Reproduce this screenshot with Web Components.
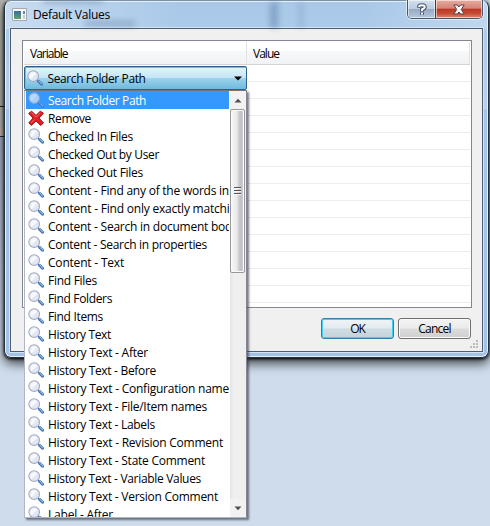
<!DOCTYPE html>
<html lang="en"><head><meta charset="utf-8"><title>Default Values</title>
<style>
html,body{margin:0;width:490px;height:526px;overflow:hidden;background:#cfdcec;font:12px/18px "Open Sans","Noto Sans",sans-serif;color:#000}
</style></head><body>
<dialog-window caption="Default Values"></dialog-window>
<script>
const define=(name,html,setup)=>customElements.define(name,class extends HTMLElement{
  constructor(){super();this.attachShadow({mode:'open'});}
  connectedCallback(){this.shadowRoot.innerHTML=html;if(setup)setup(this,this.shadowRoot);}
});

/* A label whose tracking is adjusted so it takes the given width. */
define('fit-label','<style>:host{display:inline-block;white-space:pre}span{display:inline-block}</style><span></span>',(el,root)=>{
  const s=root.querySelector('span'),t=el.getAttribute('text'),w=+el.getAttribute('w');
  s.textContent=t;
  if(w){const n=s.getBoundingClientRect().width;s.style.letterSpacing=((w-n)/t.length)+'px';}
});

define('lens-icon',`<style>:host{display:block;width:17px;height:17px}svg{display:block}</style>
<svg width="17" height="17" viewBox="0 0 17 17"><defs><linearGradient id="g" x1="0" y1="0" x2="1" y2="1"><stop offset="0" stop-color="#e3ebf8"/><stop offset=".45" stop-color="#fbfcff"/><stop offset=".6" stop-color="#dbe4f1"/><stop offset="1" stop-color="#f6f9fd"/></linearGradient></defs>
<path d="M9.8 9.8L11.4 11.4" stroke="#8e93a8" stroke-width="1.6"/><circle cx="6.2" cy="6.1" r="5.3" fill="url(#g)" stroke="#a4a8bf" stroke-width="1.2"/><circle cx="6.2" cy="6.1" r="4.3" fill="none" stroke="#dce2ee" stroke-width=".7"/>
<path d="M11.5 11.2L14.6 14.2" stroke="#3f6daf" stroke-width="2.9" stroke-linecap="round"/><path d="M11.6 10.9L14.6 13.8" stroke="#82b5ee" stroke-width="1.3" stroke-linecap="round"/></svg>`);

define('remove-icon',`<style>:host{display:block;width:17px;height:17px}svg{display:block}</style>
<svg width="17" height="17" viewBox="0 0 17 17"><path d="M3.6 1.2L8 5.4 12.3 1.2 15.4 3.2 11 8.1 15.5 13 12.6 15.4 8 11 3.3 15.4.8 13 5 8.1.7 3.4Z" fill="#e01f24" stroke="#a20d12" stroke-width="1" stroke-linejoin="round"/><path d="M3.3 2.7L8 7.2 12.5 2.8M3 13L6.5 9.5" fill="none" stroke="#f4696a" stroke-width="1"/></svg>`);

define('list-row',`<style>:host{display:flex;height:18px;width:203px;overflow:hidden;box-sizing:border-box;padding:1px 0 0 2px;flex:none}
:host([selected]){background:#3399ff;color:#fff}:host([selected]) .i{opacity:.68}.i{width:17px;margin-right:3px;flex:none}fit-label{line-height:18px;flex:none}</style><div class="i"></div>`,(el,root)=>{
  root.querySelector('.i').innerHTML=el.getAttribute('icon')==='x'?'<remove-icon></remove-icon>':'<lens-icon></lens-icon>';
  const l=document.createElement('fit-label');l.setAttribute('text',el.getAttribute('text'));l.setAttribute('w',el.getAttribute('w'));root.append(l);
});

define('scroll-bar',`<style>:host{display:flex;flex-direction:column;width:16px;height:426px;background:linear-gradient(90deg,#e4e4e4,#f0f0f0 4px,#eee)}
.b{height:18px;display:grid;place-items:center;background:#f2f2f2}.t{height:164px;width:15px;box-sizing:border-box;border:1px solid #989898;border-radius:2px;background:linear-gradient(90deg,#f8f8f8,#e9e9eb 45%,#c8c8cc 65%,#c0c0c6 80%,#dcdcdf);box-shadow:inset 0 0 0 1px #fafafa;display:grid;place-items:center}.s{flex:1}</style>
<div class="b"><svg width="8" height="5"><path d="M0.5 4.5L4 .8 7.5 4.5Z" fill="#505050"/></svg></div>
<div class="t"><svg width="8" height="9"><path d="M0 .5H7M0 3.5H7M0 6.5H7" stroke="#555"/><path d="M0 1.5H7M0 4.5H7M0 7.5H7" stroke="#fff" opacity=".8"/></svg></div><div class="s"></div>
<div class="b"><svg width="8" height="5"><path d="M.5 .5H7.5L4 4.2Z" fill="#505050"/></svg></div>`);

define('drop-list',`<style>:host{display:flex;box-sizing:border-box;width:223px;height:428px;border:1px solid #b0b6c5;border-top-color:#777;border-right-color:#858595;background:#fff;box-shadow:2px 2px 2px rgba(50,55,65,.65);overflow:hidden}
.r{padding-left:1px;width:204px;height:426px;overflow:hidden}.v{margin-left:1px}</style><div class="r"></div><scroll-bar class="v"></scroll-bar>`,(el,root)=>{
  const rows=[['Search Folder Path',98],['Remove',43],['Checked In Files',85],['Checked Out by User',111],['Checked Out Files',95],['Content - Find any of the words in',181],['Content - Find only exactly matching',195],['Content - Search in document body',190],['Content - Search in properties',159],['Content - Text',76],['Find Files',49],['Find Folders',64],['Find Items',55],['History Text',63],['History Text - After',100],['History Text - Before',108],['History Text - Configuration name',181],['History Text - File/Item names',159],['History Text - Labels',107],['History Text - Revision Comment',175],['History Text - State Comment',157],['History Text - Variable Values',153],['History Text - Version Comment',170],['Label - After',65]];
  const box=root.querySelector('.r');
  rows.forEach(([t,w],i)=>{const r=document.createElement('list-row');r.setAttribute('text',t);r.setAttribute('w',w);if(i===1)r.setAttribute('icon','x');if(!i)r.setAttribute('selected','');box.append(r);});
});

define('combo-box',`<style>:host{display:flex;align-items:center;box-sizing:border-box;width:223px;height:24px;padding:0 4px 0 2px;border:1px solid #2c628b;border-radius:2px;box-shadow:inset 1px 1px 0 #83b5cc;background:linear-gradient(#e4f4fb,#c5e5f5 48%,#9cd3ed 52%,#6fb9dc)}fit-label{flex:1;margin:2px 0 0 3.5px}</style>
<lens-icon></lens-icon><fit-label text="Search Folder Path" w="98"></fit-label><svg width="8" height="5"><path d="M0 .5H8L4 4.5Z" fill="#000"/></svg>`);

define('push-button',`<style>:host{display:grid;place-items:center;box-sizing:border-box;width:73px;height:21px;padding-top:1px;border:1px solid #707070;border-radius:3px;box-shadow:inset 0 0 0 1px #fbfbfb;background:linear-gradient(#f3f3f3,#ebebeb 48%,#dcdcdc 52%,#cfcfcf)}
:host([default]){border-color:#3a7da8;box-shadow:inset 0 0 0 1px #3fd0f8;background:linear-gradient(#f0f4f6,#e3ebef 48%,#d0dde3 52%,#c5d3da)}</style><slot></slot>`);

define('value-grid',`<style>:host{display:block;box-sizing:border-box;width:450px;height:268px;border:1px solid #828790;background:#fff;padding:1px 1px 0}
.h{display:flex;height:22px;border-bottom:1px solid #d5d5d5;background:linear-gradient(#fff 40%,#f7f8fa 42%,#f1f2f4)}.h div{box-sizing:border-box;border-right:1px solid #e0e2e6;padding:3px 0 0 6px}.a{width:223px}.b{flex:1}
.l{height:240px;background:repeating-linear-gradient(#fff 0 16px,#ededed 16px 17px)}</style>
<div class="h"><div class="a"><fit-label text="Variable" w="37.5"></fit-label></div><div class="b"><fit-label text="Value" w="26"></fit-label></div></div><div class="l"></div>`);

define('caption-buttons',`<style>:host{display:flex;box-sizing:border-box;width:76px;height:19px;border:1px solid #46566c;border-top:0;border-radius:0 0 5px 5px;overflow:hidden;box-shadow:0 0 0 1px rgba(255,255,255,.55)}
div{display:grid;place-items:center;box-shadow:inset 0 0 0 1px rgba(255,255,255,.55)}.q{width:27px;border-right:1px solid #59302f;background:linear-gradient(#d3dfed,#bccde0 48%,#96aac3 52%,#b4c9df)}.x{flex:1;background:linear-gradient(#e5aca0,#d58476 46%,#b93722 50%,#c64c34 75%,#e08a70)}</style>
<div class="q"><svg width="10" height="13" viewBox="0 0 10 13" fill="none"><path d="M2.2 4.8V3.3Q2.2 2.2 5 2.2T7.8 4Q7.8 5.3 5 6.5V8.4M5 9.6V11.8" stroke="#45506a" stroke-width="4"/><path d="M2.2 4V3.3Q2.2 2.2 5 2.2T7.8 4Q7.8 5.3 5 6.5V8M5 9.7V11.4" stroke="#fff" stroke-width="2"/></svg></div>
<div class="x"><svg width="12" height="11" viewBox="0 0 12 11"><path d="M.8 1H4.3L6 2.9 7.7 1H11.2L8.3 5.4 11.2 10H7.7L6 8 4.3 10H.8L3.7 5.4Z" fill="#f8f8f8" stroke="#54404d"/></svg></div>`);

define('dialog-window',`<style>
:host{display:block;position:relative;width:490px;height:526px;overflow:hidden}
.desk{position:absolute;inset:0 auto auto 0;width:20px;height:345px;background:linear-gradient(#b4b4b0 0 106px,#222 106px 107px,#bdbdb8 107px 128px,#c9bfb2 128px 136px,#333 136px 137px,#a9b7c9 137px,#cfdcec)}
.win{position:absolute;left:4px;top:0;width:485px;height:358px;box-sizing:border-box;border:1px solid #25303b;border-top-color:#7d91a6;border-radius:7px;background:linear-gradient(90deg,rgba(255,255,255,.35),transparent 35% 75%,rgba(255,255,255,.25)) top/100% 28px no-repeat,linear-gradient(#a9c8e8,#b6d1ee 30%,#d8e7f7 107px,#a4c4e9 108px,#a2c2e8);box-shadow:inset 0 0 0 1px #e4f0fa,0 1px 3px #000,0 5px 12px rgba(0,0,0,.75)}
header{display:flex;height:27px;align-items:center;padding-left:7px}header svg{margin-right:6px}caption-buttons{position:absolute;left:402px;top:-1px}
.sm{position:absolute;top:1px;height:26px;filter:blur(3px);background:#43688f;opacity:.4}
.client{margin-left:5px;margin-top:0;width:473px;height:324px;box-sizing:border-box;border:1px solid #4e5d70;background:#f0f0f0;padding:11px 0 0 11px;box-shadow:0 0 0 1px #d3e4f4}
.btns{display:flex;gap:4px;margin:10px 0 0 299px}.over{position:absolute;left:24px;top:66px}
.grip{position:absolute;right:9px;bottom:8px}fit-label{position:relative}
</style>
<div class="desk"></div><div class="win"><div class="sm" style="left:265px;width:8px"></div><div class="sm" style="left:294px;width:4px;opacity:.25"></div><div class="sm" style="left:80px;top:20px;width:50px;height:5px"></div><div class="sm" style="left:38px;top:-3px;width:60px;height:5px"></div>
<header><svg width="15" height="13"><defs><linearGradient id="v" x2="0" y2="1"><stop stop-color="#356ca3"/><stop offset="1" stop-color="#65a26a"/></linearGradient></defs><path d="M.5.5H14.5V12.5H.5Z" fill="#f7f7f7" stroke="#a3a9af"/><path d="M2 3H9V11H2Z" fill="url(#v)"/><path d="M11 3H13V6H11Z" fill="#6d8796"/><path d="M11 7H13V11H11Z" fill="#c7ccd0"/></svg><fit-label text="Default Values" w="77"></fit-label></header><caption-buttons></caption-buttons>
<div class="client"><value-grid></value-grid><div class="btns"><push-button default><fit-label text="OK" w="14.5"></fit-label></push-button><push-button><fit-label text="Cancel" w="32.5"></fit-label></push-button></div></div>
<svg class="grip" width="9" height="9" fill="#bbb"><path d="M6 0h2v2h-2zM3 3h2v2h-2zM6 3h2v2h-2zM0 6h2v2h-2zM3 6h2v2h-2zM6 6h2v2h-2z"/></svg></div>
<div class="over"><combo-box></combo-box><drop-list></drop-list></div>`);
</script></body></html>
